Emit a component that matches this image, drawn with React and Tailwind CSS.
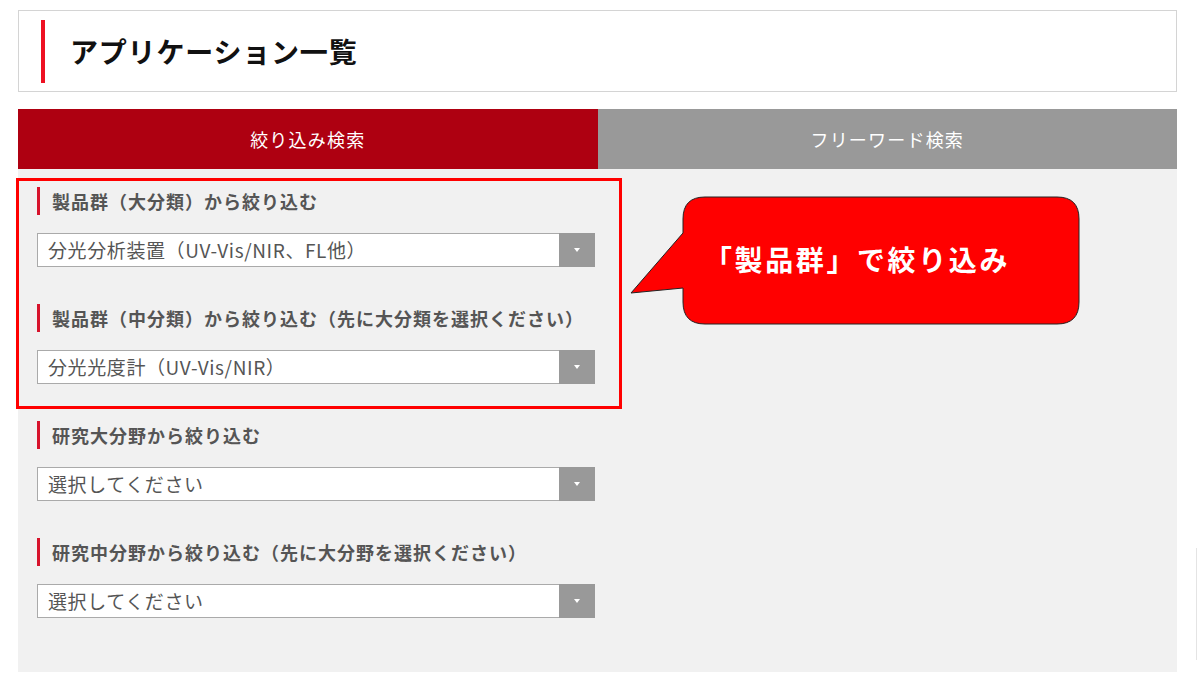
import React from 'react';

const groups = [
  { label: '製品群（大分類）から絞り込む', value: '分光分析装置（UV-Vis/NIR、FL他）' },
  { label: '製品群（中分類）から絞り込む（先に大分類を選択ください）', value: '分光光度計（UV-Vis/NIR）' },
  { label: '研究大分野から絞り込む', value: '選択してください' },
  { label: '研究中分野から絞り込む（先に大分野を選択ください）', value: '選択してください' },
];

function SelectBox({ value }) {
  return (
    <div className="flex h-[34px] w-[558px] border border-[#aaaaaa] bg-white">
      <div className="flex flex-1 items-center pl-[10px] text-[19px] text-[#555555] tracking-[0.6px]">{value}</div>
      <div className="-my-px -mr-px flex w-[36px] items-center justify-center bg-[#999999]">
        <div className="h-0 w-0 border-x-[3px] border-t-[4px] border-x-transparent border-t-white" />
      </div>
    </div>
  );
}

function Callout() {
  return (
    <div className="absolute left-[630px] top-[196px] h-[130px] w-[452px]">
      <svg width="452" height="130" viewBox="0 0 452 130" className="absolute inset-0">
        <path
          d="M75 1 H427 Q449 1 449 23 V106 Q449 128 427 128 H75 Q53 128 53 106 V92 L1 97 L53 37 V23 Q53 1 75 1 Z"
          fill="#ff0000"
          stroke="#222"
          strokeWidth="1"
        />
      </svg>
      <div className="absolute left-[74px] top-[43px] text-[28px] font-bold text-white tracking-[2.6px] leading-[40px]">
        「製品群」で絞り込み
      </div>
    </div>
  );
}

export default function App() {
  return (
    <div
      className="relative h-[687px] w-full overflow-hidden bg-white"
      style={{ fontFamily: '"Noto Sans CJK JP", "Noto Sans", sans-serif' }}
    >
      <div className="ml-[18px] w-[1159px] pt-[10px]">
        {/* title */}
        <div className="flex h-[82px] items-center border border-[#d4d4d4] pl-[22px]">
          <div className="h-[63px] w-[4px] bg-[#ee1122]" />
          <h1 className="ml-[25px] text-[28px] font-bold text-[#111111] tracking-[0.8px]">アプリケーション一覧</h1>
        </div>

        {/* tabs */}
        <div className="mt-[17px] flex h-[60px]">
          <div className="relative flex flex-1 items-center justify-center bg-[#ae0011] text-[18px] text-white tracking-[1.2px]">
            絞り込み検索
            <div className="absolute left-1/2 top-full h-0 w-0 -translate-x-1/2 border-x-[10px] border-t-[8px] border-x-transparent border-t-[#ae0011]" />
          </div>
          <div className="flex flex-1 items-center justify-center bg-[#999999] text-[18px] text-white tracking-[1.2px]">
            フリーワード検索
          </div>
        </div>

        {/* panel */}
        <div className="relative flex h-[503px] flex-col gap-[37px] bg-[#f1f1f1] pl-[19px] pt-[18px]">
          {groups.map((g, i) => (
            <div key={i} className="flex flex-col gap-[18px]">
              <div className="flex h-[28px] items-center border-l-[3px] border-[#d7132c] pl-[12px] text-[18px] font-bold text-[#555555] tracking-[1px]">
                {g.label}
              </div>
              <SelectBox value={g.value} />
            </div>
          ))}
          <div className="pointer-events-none absolute left-[-2px] top-[9px] h-[231px] w-[606px] border-[3px] border-[#ff0000]" />
        </div>
      </div>

      <Callout />

      <div className="absolute right-0 top-[548px] h-[112px] w-px bg-[#e4e4e4]" />
    </div>
  );
}
